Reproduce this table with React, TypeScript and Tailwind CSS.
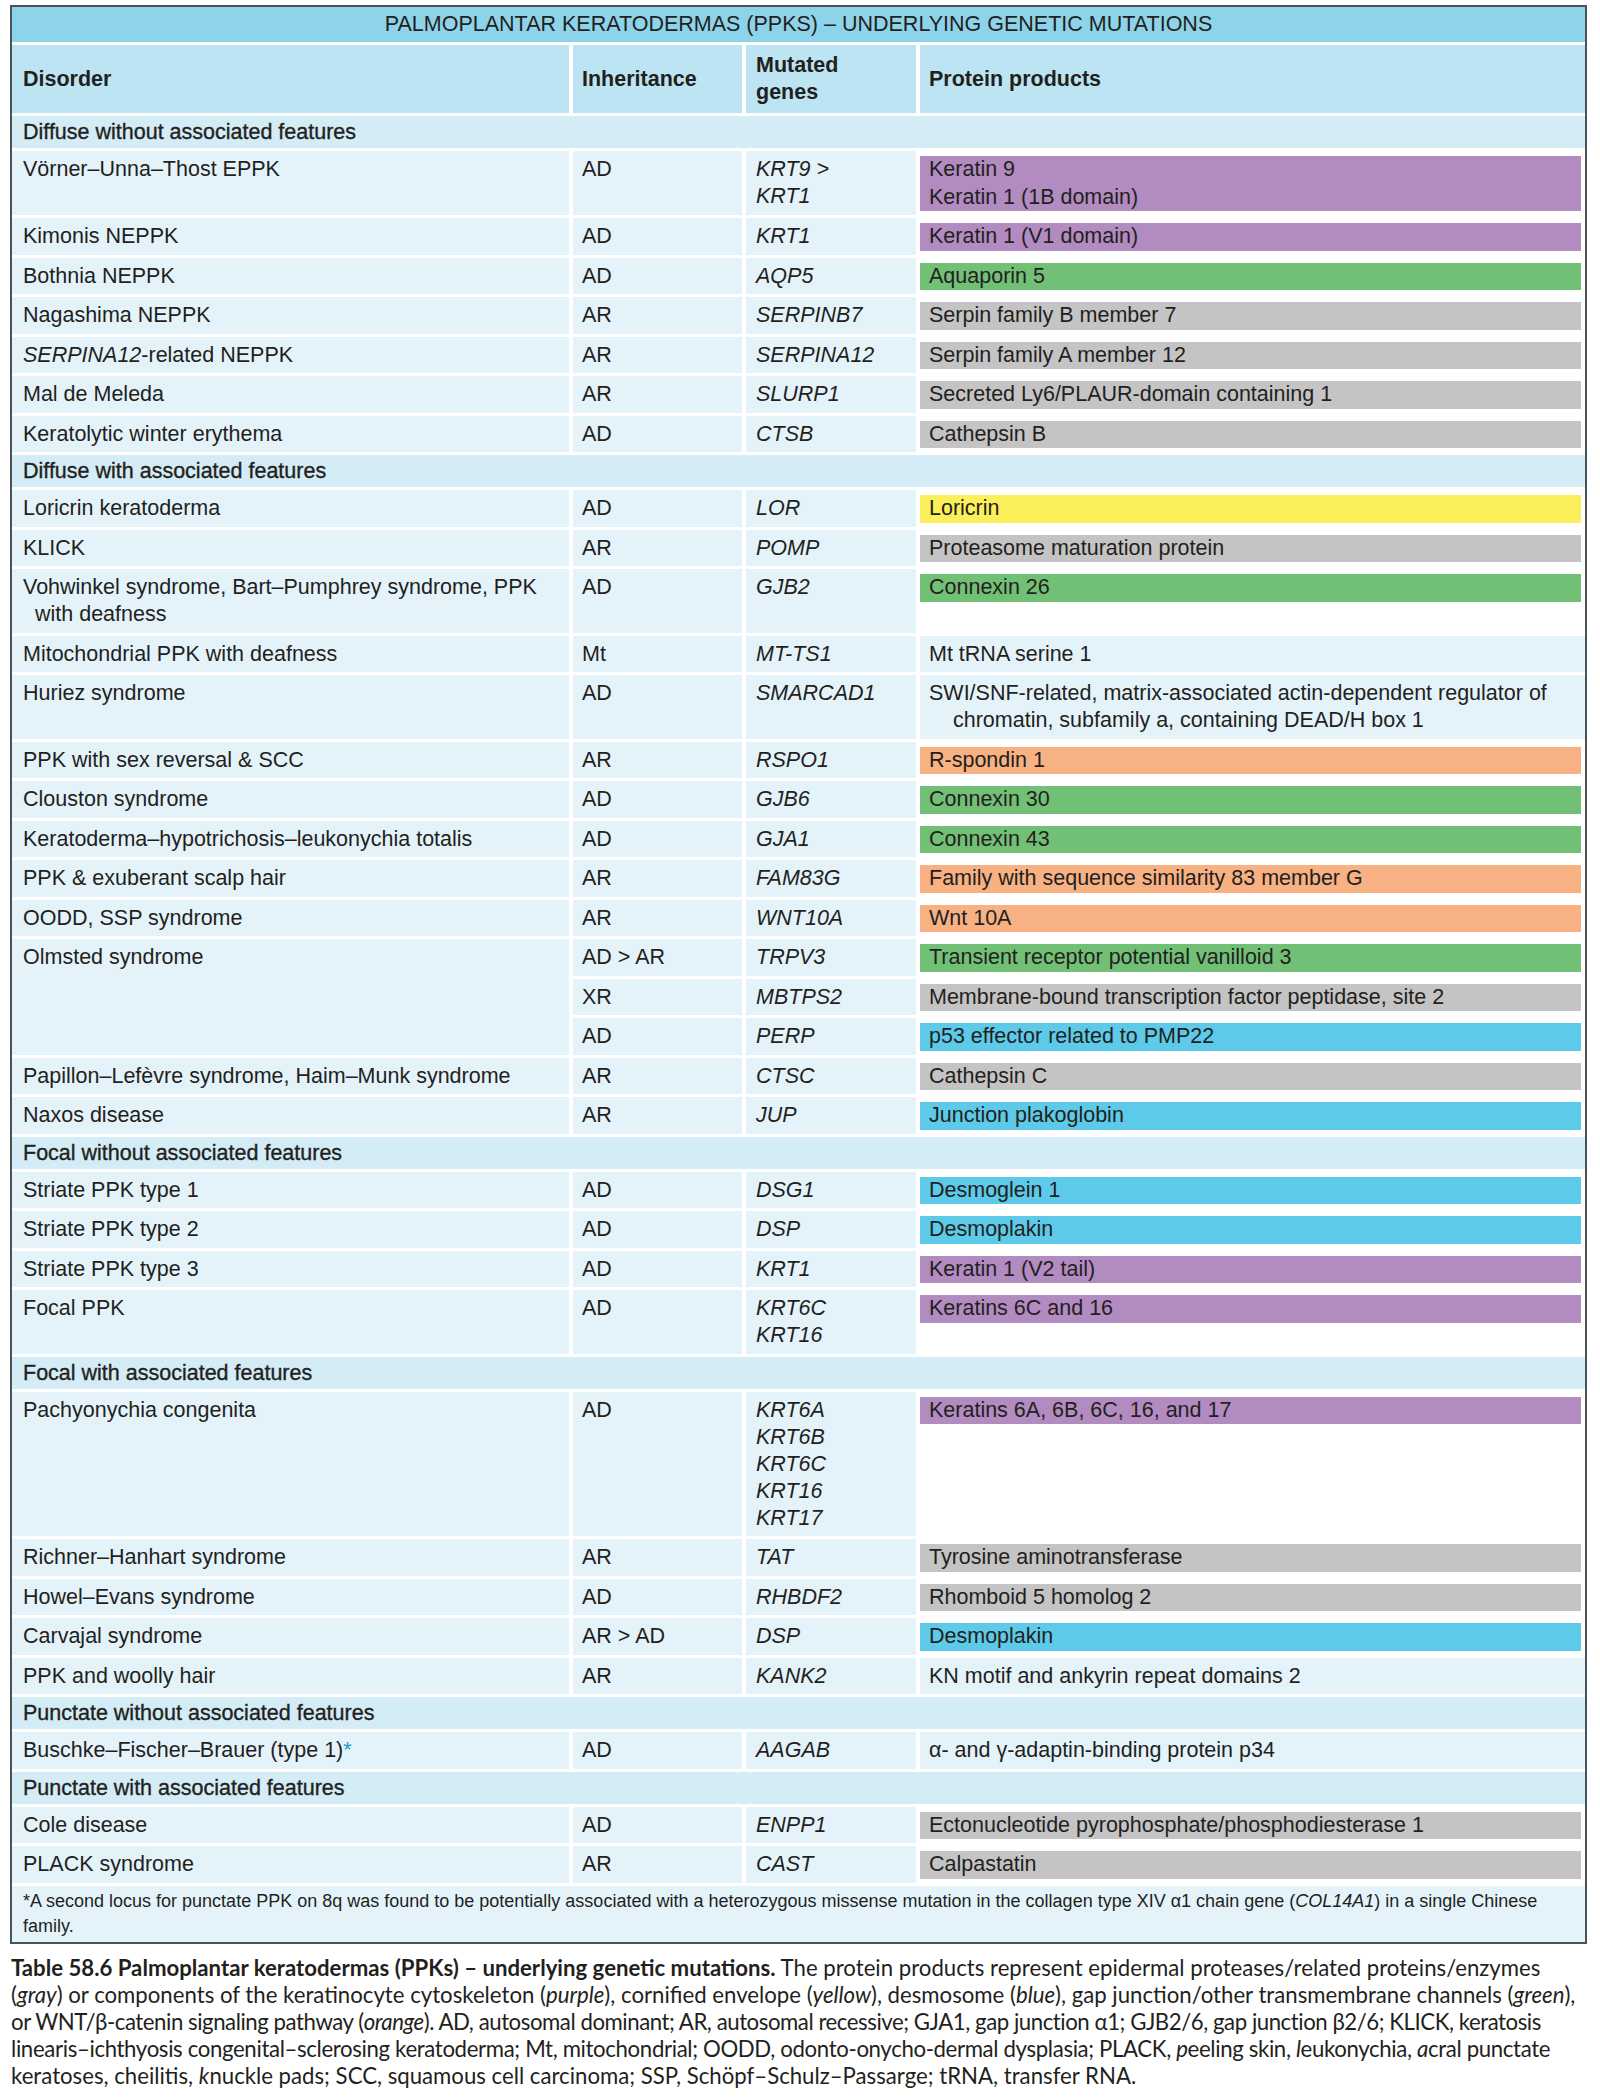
import type { ReactNode } from 'react';

type Tone = 'purple' | 'green' | 'gray' | 'yellow' | 'orange' | 'blue';

interface Entry {
  inh: string;
  genes: string[];
  prot: string[];
  tone?: Tone;
}

type Row =
  | { section: string }
  | { disorder: ReactNode[]; entries: Entry[] };

const TONES: Record<Tone, string> = {
  purple: 'bg-[#b28bc0]',
  green: 'bg-[#72c076]',
  gray: 'bg-[#c4c4c4]',
  yellow: 'bg-[#fcf05a]',
  orange: 'bg-[#f7b183]',
  blue: 'bg-[#5ccae8]',
};

const one = (d: ReactNode, inh: string, gene: string, prot: string, tone?: Tone): Row => ({
  disorder: [d],
  entries: [{ inh, genes: [gene], prot: [prot], tone }],
});

const ROWS: Row[] = [
  { section: 'Diffuse without associated features' },
  {
    disorder: ['Vörner–Unna–Thost EPPK'],
    entries: [{ inh: 'AD', genes: ['KRT9 >', 'KRT1'], prot: ['Keratin 9', 'Keratin 1 (1B domain)'], tone: 'purple' }],
  },
  one('Kimonis NEPPK', 'AD', 'KRT1', 'Keratin 1 (V1 domain)', 'purple'),
  one('Bothnia NEPPK', 'AD', 'AQP5', 'Aquaporin 5', 'green'),
  one('Nagashima NEPPK', 'AR', 'SERPINB7', 'Serpin family B member 7', 'gray'),
  one(<><i>SERPINA12</i>-related NEPPK</>, 'AR', 'SERPINA12', 'Serpin family A member 12', 'gray'),
  one('Mal de Meleda', 'AR', 'SLURP1', 'Secreted Ly6/PLAUR-domain containing 1', 'gray'),
  one('Keratolytic winter erythema', 'AD', 'CTSB', 'Cathepsin B', 'gray'),
  { section: 'Diffuse with associated features' },
  one('Loricrin keratoderma', 'AD', 'LOR', 'Loricrin', 'yellow'),
  one('KLICK', 'AR', 'POMP', 'Proteasome maturation protein', 'gray'),
  {
    disorder: ['Vohwinkel syndrome, Bart–Pumphrey syndrome, PPK', 'with deafness'],
    entries: [{ inh: 'AD', genes: ['GJB2'], prot: ['Connexin 26'], tone: 'green' }],
  },
  one('Mitochondrial PPK with deafness', 'Mt', 'MT-TS1', 'Mt tRNA serine 1'),
  {
    disorder: ['Huriez syndrome'],
    entries: [
      {
        inh: 'AD',
        genes: ['SMARCAD1'],
        prot: ['SWI/SNF-related, matrix-associated actin-dependent regulator of', 'chromatin, subfamily a, containing DEAD/H box 1'],
      },
    ],
  },
  one('PPK with sex reversal & SCC', 'AR', 'RSPO1', 'R-spondin 1', 'orange'),
  one('Clouston syndrome', 'AD', 'GJB6', 'Connexin 30', 'green'),
  one('Keratoderma–hypotrichosis–leukonychia totalis', 'AD', 'GJA1', 'Connexin 43', 'green'),
  one('PPK & exuberant scalp hair', 'AR', 'FAM83G', 'Family with sequence similarity 83 member G', 'orange'),
  one('OODD, SSP syndrome', 'AR', 'WNT10A', 'Wnt 10A', 'orange'),
  {
    disorder: ['Olmsted syndrome'],
    entries: [
      { inh: 'AD > AR', genes: ['TRPV3'], prot: ['Transient receptor potential vanilloid 3'], tone: 'green' },
      { inh: 'XR', genes: ['MBTPS2'], prot: ['Membrane-bound transcription factor peptidase, site 2'], tone: 'gray' },
      { inh: 'AD', genes: ['PERP'], prot: ['p53 effector related to PMP22'], tone: 'blue' },
    ],
  },
  one('Papillon–Lefèvre syndrome, Haim–Munk syndrome', 'AR', 'CTSC', 'Cathepsin C', 'gray'),
  one('Naxos disease', 'AR', 'JUP', 'Junction plakoglobin', 'blue'),
  { section: 'Focal without associated features' },
  one('Striate PPK type 1', 'AD', 'DSG1', 'Desmoglein 1', 'blue'),
  one('Striate PPK type 2', 'AD', 'DSP', 'Desmoplakin', 'blue'),
  one('Striate PPK type 3', 'AD', 'KRT1', 'Keratin 1 (V2 tail)', 'purple'),
  {
    disorder: ['Focal PPK'],
    entries: [{ inh: 'AD', genes: ['KRT6C', 'KRT16'], prot: ['Keratins 6C and 16'], tone: 'purple' }],
  },
  { section: 'Focal with associated features' },
  {
    disorder: ['Pachyonychia congenita'],
    entries: [
      { inh: 'AD', genes: ['KRT6A', 'KRT6B', 'KRT6C', 'KRT16', 'KRT17'], prot: ['Keratins 6A, 6B, 6C, 16, and 17'], tone: 'purple' },
    ],
  },
  one('Richner–Hanhart syndrome', 'AR', 'TAT', 'Tyrosine aminotransferase', 'gray'),
  one('Howel–Evans syndrome', 'AD', 'RHBDF2', 'Rhomboid 5 homolog 2', 'gray'),
  one('Carvajal syndrome', 'AR > AD', 'DSP', 'Desmoplakin', 'blue'),
  one('PPK and woolly hair', 'AR', 'KANK2', 'KN motif and ankyrin repeat domains 2'),
  { section: 'Punctate without associated features' },
  one(<>Buschke–Fischer–Brauer (type 1)<span className="text-[#1c9cc4]">*</span></>, 'AD', 'AAGAB', 'α- and γ-adaptin-binding protein p34'),
  { section: 'Punctate with associated features' },
  one('Cole disease', 'AD', 'ENPP1', 'Ectonucleotide pyrophosphate/phosphodiesterase 1', 'gray'),
  one('PLACK syndrome', 'AR', 'CAST', 'Calpastatin', 'gray'),
];

const cell = 'bg-[#e4f3fa] pt-[5px] pb-[4.5px] leading-[27px]';

function Lines({ lines, indent }: { lines: ReactNode[]; indent: string }) {
  return (
    <>
      {lines.map((l, i) => (
        <div key={i} className={i > 0 ? indent : ''}>{l}</div>
      ))}
    </>
  );
}

function Protein({ e }: { e: Entry }) {
  if (!e.tone) {
    return (
      <div className={`${cell} pl-[9px] pr-[6px] whitespace-nowrap`}>
        <Lines lines={e.prot} indent="pl-[24px]" />
      </div>
    );
  }
  return (
    <div className="bg-white pt-[5px] pb-[4px] pr-[4px]">
      <div className={`${TONES[e.tone]} pl-[9px] leading-[27.5px]`}>
        <Lines lines={e.prot} indent="" />
      </div>
    </div>
  );
}

export default function App() {
  return (
    <div className="w-[1600px] min-h-[2097px] bg-white pt-[5px] pl-[10px] text-[#231f20] [font-family:'Liberation_Sans',Arial,sans-serif]">
      <div className="w-[1577px] border-2 border-[#48525a] bg-white grid grid-cols-[557px_169px_170px_665px] gap-x-[4px] gap-y-[3px] text-[21.5px]">
        <div className="col-span-4 h-[35px] bg-[#8dd4ea] flex items-center justify-center">
          PALMOPLANTAR KERATODERMAS (PPKS) – UNDERLYING GENETIC MUTATIONS
        </div>
        <div className="h-[68px] bg-[#bce4f2] font-bold flex items-center px-[11px]">Disorder</div>
        <div className="h-[68px] bg-[#bce4f2] font-bold flex items-center px-[9px]">Inheritance</div>
        <div className="h-[68px] bg-[#bce4f2] font-bold flex items-center px-[10px] leading-[27px]">
          Mutated
          <br />
          genes
        </div>
        <div className="h-[68px] bg-[#bce4f2] font-bold flex items-center px-[9px]">Protein products</div>

        {ROWS.map((r, idx) => {
          if ('section' in r) {
            return (
              <div
                key={idx}
                className="col-span-4 bg-[#d3ecf6] px-[11px] pt-[3px] pb-[2px] leading-[27px] [-webkit-text-stroke:0.35px_#231f20]"
              >
                {r.section}
              </div>
            );
          }
          const span = r.entries.length;
          return [
            <div
              key={`${idx}-d`}
              className={`${cell} px-[11px] ${span === 3 ? 'row-span-3' : ''}`}
            >
              <Lines lines={r.disorder} indent="pl-[12px]" />
            </div>,
            ...r.entries.flatMap((e, j) => [
              <div key={`${idx}-${j}-i`} className={`${cell} px-[9px]`}>{e.inh}</div>,
              <div key={`${idx}-${j}-g`} className={`${cell} px-[10px] italic`}>
                <Lines lines={e.genes} indent="" />
              </div>,
              <Protein key={`${idx}-${j}-p`} e={e} />,
            ]),
          ];
        })}

        <div className="col-span-4 bg-[#e4f3fa] px-[11px] pt-[3px] pb-[3px] text-[18px] leading-[25px] whitespace-nowrap">
          <div>
            *A second locus for punctate PPK on 8q was found to be potentially associated with a heterozygous missense mutation in the collagen type XIV α1 chain gene (<i>COL14A1</i>) in a single Chinese
          </div>
          <div>family.</div>
        </div>
      </div>

      <div className="mt-[10px] pl-[1px] text-[22.2px] leading-[27.2px] whitespace-nowrap [font-family:Lato,'Open_Sans',sans-serif]">
        <div>
          <b>Table 58.6 Palmoplantar keratodermas (PPKs) – underlying genetic mutations.</b> The protein products represent epidermal proteases/related proteins/enzymes
        </div>
        <div>
          (<i>gray</i>) or components of the keratinocyte cytoskeleton (<i>purple</i>), cornified envelope (<i>yellow</i>), desmosome (<i>blue</i>), gap junction/other transmembrane channels (<i>green</i>),
        </div>
        <div className="tracking-[-0.45px]">
          or WNT/β-catenin signaling pathway (<i>orange</i>). AD, autosomal dominant; AR, autosomal recessive; GJA1, gap junction α1; GJB2/6, gap junction β2/6; KLICK, keratosis
        </div>
        <div className="tracking-[-0.35px]">
          linearis–ichthyosis congenital–sclerosing keratoderma; Mt, mitochondrial; OODD, odonto-onycho-dermal dysplasia; PLACK, <i>p</i>eeling skin, <i>l</i>eukonychia, <i>a</i>cral punctate
        </div>
        <div>
          keratoses, cheilitis, <i>k</i>nuckle pads; SCC, squamous cell carcinoma; SSP, Schöpf–Schulz–Passarge; tRNA, transfer RNA.
        </div>
      </div>
    </div>
  );
}
